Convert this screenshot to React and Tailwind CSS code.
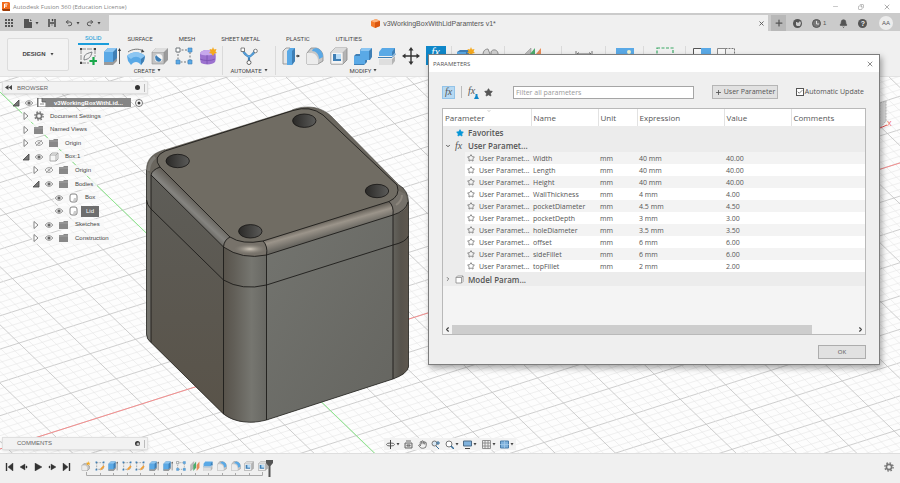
import { Star, X, Plus, Minus, Copy, Bell, Check, ChevronDown, ChevronRight, ChevronLeft, Hand, Undo2, Redo2 } from 'lucide-react'

const TABS = ['SOLID', 'SURFACE', 'MESH', 'SHEET METAL', 'PLASTIC', 'UTILITIES']

const GROUPS = [
  { name: 'CREATE', width: 'w-[150px]', label: true, icons: ['sketch', 'extrude', 'revolve', 'hole', 'pattern', 'form'] },
  { name: 'AUTOMATE', width: 'w-[53px]', label: true, icons: ['automate'] },
  { name: 'MODIFY', width: 'w-[176px]', label: true, icons: ['presspull', 'fillet', 'shell', 'combine', 'split', 'move', 'fx'] },
  { name: 'ASSEMBLE', width: 'w-[53px]', icons: ['component', 'joint'] },
  { name: 'CONSTRUCT', width: 'w-[57px]', icons: ['plane'] },
  { name: 'INSPECT', width: 'w-[44px]', icons: ['measure'] },
  { name: 'INSERT', width: 'w-[38px]', icons: ['insert'] },
  { name: 'SELECT', width: 'w-[42px]', icons: ['select'] },
  { name: 'POSITION', width: 'w-[55px]', icons: ['capture', 'revert'], last: true },
]

const TREE = [
  { label: 'Document Settings', pad: 'pl-[20px]', arrow: 'closed', icon: 'gear' },
  { label: 'Named Views', pad: 'pl-[20px]', arrow: 'closed', icon: 'folder' },
  { label: 'Origin', pad: 'pl-[20px]', arrow: 'closed', eye: 'off', icon: 'folder' },
  { label: 'Box:1', pad: 'pl-[20px]', arrow: 'open', eye: 'on', icon: 'cube' },
  { label: 'Origin', pad: 'pl-[30px]', arrow: 'closed', eye: 'off', icon: 'folder' },
  { label: 'Bodies', pad: 'pl-[30px]', arrow: 'open', eye: 'on', icon: 'folder' },
  { label: 'Box', pad: 'pl-[52px]', eye: 'on', icon: 'body' },
  { label: 'Lid', pad: 'pl-[52px]', eye: 'on', icon: 'body', selected: true },
  { label: 'Sketches', pad: 'pl-[30px]', arrow: 'closed', eye: 'on', icon: 'folder' },
  { label: 'Construction', pad: 'pl-[30px]', arrow: 'closed', eye: 'on', icon: 'folder' },
]

const PARAMS = [
  ['Width', '40 mm', '40.00'],
  ['Length', '40 mm', '40.00'],
  ['Height', '40 mm', '40.00'],
  ['WallThickness', '4 mm', '4.00'],
  ['pocketDiameter', '4.5 mm', '4.50'],
  ['pocketDepth', '3 mm', '3.00'],
  ['holeDiameter', '3.5 mm', '3.50'],
  ['offset', '6 mm', '6.00'],
  ['sideFillet', '6 mm', '6.00'],
  ['topFillet', '2 mm', '2.00'],
]

const HISTORY = ['newComponent', 'sketchEdit', 'extrude', 'sketchEdit', 'sketchEdit', 'extrude', 'extrude', 'pattern', 'plane', 'split', 'fillet', 'fillet', 'shell', 'shell']

const blue = '#5aa9e6'
const dark = '#3f7fb5'
const line = '#6f7478'

const ART = {
  sketch: (
    <>
      <path d="M2 2h14M2 2v14M16 2v8M2 16h8" stroke="#777" strokeWidth=".8" strokeDasharray="5 1" fill="none" />
      <path d="M5 13c0-5 1-6 8-8-1 5-3 7-8 8z" fill="none" stroke={line} strokeWidth=".9" />
      <path d="M1 1h2v2H1zM15 1h2v2h-2zM1 15h2v2H1z" fill="#444" />
      <path d="M14.500 10v8M10.500 14h8" stroke="#1aa84b" strokeWidth="2.200" />
    </>
  ),
  sketchEdit: (
    <>
      <path d="M3 3h12v12H3z" stroke={line} strokeDasharray="3 2" fill="none" />
      <path d="M1 1h3v3H1zM14 1h3v3h-3zM1 14h3v3H1z" fill={dark} />
      <path d="M9 17l1-4 5-5 2.500 2.500-5 5z" fill="#f0a03a" />
    </>
  ),
  extrude: (
    <>
      <path d="M1 5l4-4h9v11l-4 5H1z" fill={dark} />
      <path d="M1 5h9v12H1z" fill={blue} />
      <path d="M1 5l4-4h9l-4 4z" fill="#8cc6f2" />
      <path d="M1 15h9l4-4v3l-4 4H1z" fill="#9a9a9a" />
      <path d="M16.500 3v14" stroke="#333" strokeWidth=".8" />
      <path d="M15 4l1.500-3L18 4z" fill="#333" />
    </>
  ),
  revolve: (
    <>
      <path d="M0 9c5-5 13-5 18 0l-1 5-3 4c-3-4-7-4-10 0l-3-4z" fill={blue} />
      <path d="M0 9c5-5 13-5 18 0l-4 3c-3-3-7-3-10 0z" fill="#8cc6f2" />
      <path d="M14 12l4-3-1 5-3 4z" fill={dark} />
      <path d="M1 5c4-3 11-4 15-1" stroke="#555" strokeWidth=".8" fill="none" />
      <path d="M15 2l2.500 3-3.500.5z" fill="#444" />
    </>
  ),
  hole: (
    <>
      <path d="M1 5l4-4h12v12l-4 4H1z" fill="#9b9b9b" />
      <path d="M1 5h12v12H1z" fill="#c4c4c4" stroke="#909090" strokeWidth=".6" />
      <path d="M1 5l4-4h12l-4 4z" fill="#dedede" />
      <circle cx="7.500" cy="11" r="4" fill="#f5f5f5" />
      <path d="M5 8a4 4 0 0 0 4 6.500 4 4 0 0 0 1.500-2L7 10z" fill={dark} />
    </>
  ),
  pattern: (
    <>
      <path d="M3 3h12v12H3z" stroke={line} strokeDasharray="2 1.500" fill="none" />
      <path d="M1 1h4v4H1z" fill="#fff" stroke={line} />
      <path d="M13 1h4v4h-4zM1 13h4v4H1zM13 13h4v4h-4z" fill={blue} stroke={dark} strokeWidth=".6" />
    </>
  ),
  form: (
    <>
      <path d="M1 7c0-2 3-4 7-4l8 2c1 2 1 8 0 10-2 3-11 3-14 1-1-2-1-7-1-9z" fill="#9c72cf" />
      <path d="M1 7c0-2 3-4 7-4s6 1 8 3c-1 3-13 3-15 1z" fill="#c7a8ec" />
      <path d="M8 8v9M1 12c4 2 11 2 15 0" stroke="#7a50b0" strokeWidth=".8" fill="none" />
      <path d="M14 0l1 2.500 2.500-.5-1 2.500 1.500 1.500-2.500.5L14 9l-1.500-2.500-2.500-.5 1.500-1.500-1-2.500 2.500.5z" fill="#f5a81c" />
    </>
  ),
  automate: (
    <>
      <path d="M3 3c1 5 4 5 6 7 2-2 5-2 6-7M9 9v6" stroke={dark} strokeWidth="2.200" fill="none" />
      <path d="M3 3c1 5 4 5 6 7 2-2 5-2 6-7" stroke={blue} strokeWidth="1.200" fill="none" />
      <path d="M1 1h3.500v3.500H1z" fill="#fff" stroke="#666" strokeWidth=".8" />
      <circle cx="15.500" cy="4" r="1.800" fill="#fff" stroke="#666" strokeWidth=".8" />
      <circle cx="9" cy="15.500" r="2" fill="#fff" stroke="#666" />
    </>
  ),
  presspull: (
    <>
      <path d="M1 4l3-3h4v13l-3 3H1z" fill="#e6e6e6" stroke="#888" strokeWidth=".8" />
      <path d="M5 4l3-3h5v13l-3 4H5z" fill={blue} />
      <path d="M10 4l3-3v13l-3 4z" fill={dark} />
      <path d="M14 9h2" stroke="#333" />
      <path d="M15.500 7.500L18 9l-2.500 1.500z" fill="#333" />
    </>
  ),
  fillet: (
    <>
      <path d="M1 6l4-5h5c5 1 7 5 7 9v4l-5 3H1z" fill="#c8c8c8" stroke="#888" strokeWidth=".8" />
      <path d="M1 6h5c4 1 6 4 6 8v3H1z" fill="#ececec" />
      <path d="M7 2l3-1c5 1 7 5 7 9l-4 2c0-5-3-8-7-8z" fill={blue} />
    </>
  ),
  shell: (
    <>
      <path d="M1 5l4-4h12v12l-4 4H1z" fill="#b4b4b4" stroke="#888" strokeWidth=".8" />
      <path d="M1 5h12v12H1z" fill="#f4f4f4" stroke="#999" strokeWidth=".5" />
      <path d="M1 5l4-4h12l-4 4z" fill="#dcdcdc" />
      <path d="M3 7h8v7H3z" fill={dark} />
      <path d="M6 7h5v5H6z" fill="#b9dcf6" />
    </>
  ),
  combine: (
    <>
      <path d="M6 3l2-2h10v9l-2 3h-3v2l-3 3H0V9l2-2h4z" fill={dark} />
      <path d="M6 4h9v9h-4v4H0V9h6z" fill={blue} />
      <path d="M6 4l2-3h10l-3 3z" fill="#8cc6f2" />
    </>
  ),
  split: (
    <>
      <path d="M1 5l3-4h13v5l-3 3H1z" fill={blue} />
      <path d="M14 5l3-4v5l-3 3z" fill={dark} />
      <path d="M1 12h13l3-3v5l-3 4H1z" fill="#b5b5b5" />
      <path d="M1 12h13v6H1z" fill="#dedede" />
      <path d="M0 10.500h14l4-4" stroke={dark} fill="none" />
    </>
  ),
  move: (
    <path d="M9 0l2.500 3.500H9.700v4.800h4.800V6.500L18 9l-3.500 2.500V9.700H9.700v4.800h1.800L9 18l-2.500-3.500h1.800V9.700H3.500v1.800L0 9l3.500-2.500v1.800h4.800V3.500H6.500z" fill="#333" />
  ),
  component: (
    <>
      <path d="M0 5l3-2h9v13H0z" fill={dark} />
      <path d="M0 5h9v11H0z" fill={blue} />
      <path d="M14 0l1 2.500 2.500-.5-1 2.500 1.500 1.500-2.500.5L14 9l-1.500-2.500-2.500-.5 1.500-1.500-1-2.500 2.500.5z" fill="#f5a81c" />
    </>
  ),
  newComponent: (
    <>
      <path d="M2 8l3-3h5l5 4v5l-3 3H2z" fill="#c9c9c9" stroke="#777" />
      <path d="M2 8h6l3 3v6H2z" fill="#ececec" />
      <path d="M13 0l1 3h3l-2 2 1 3-3-2-3 2 1-3-2-2h3z" fill="#f5a81c" />
    </>
  ),
  joint: (
    <>
      <path d="M2 8c0-5 3-6 5-6l2 5-2 8H3z" fill="#d7d7d7" stroke="#777" strokeWidth=".8" />
      <path d="M10 5c1-3 6-3 7 1v8l-4 1-3-4z" fill="#cfcfcf" stroke="#777" strokeWidth=".8" />
      <circle cx="6" cy="9" r="2" fill={line} />
    </>
  ),
  plane: (
    <>
      <path d="M1 7l6-6v11l-6 6z" fill="#bcbcbc" stroke="#888" strokeWidth=".5" />
      <path d="M6 7l5-6v11l-5 6z" fill="#4cab6c" />
      <path d="M12 7l5-6v11l-5 6z" fill="#e78a55" />
    </>
  ),
  measure: <path d="M1 4v9M17 4v9M2 7h14M4 5.500L2 7l2 1.500M14 5.500L16 7l-2 1.500" stroke="#666" strokeWidth=".9" fill="none" />,
  insert: (
    <>
      <path d="M0 1h18v16H0z" fill={blue} />
      <path d="M0 13l6-6 4 4 3-2 5 5v3H0z" fill="#2d6794" />
      <circle cx="13" cy="5" r="2" fill="#f3f3d0" />
    </>
  ),
  select: <path d="M1 1h16v16H1z" fill="none" stroke="#3aa765" strokeDasharray="3 1.500" strokeWidth="1.200" />,
  capture: (
    <>
      <path d="M.5 1.500h17v14H.5z" fill="#f7f7f7" stroke="#555" />
      <path d="M8 1h10v9H8z" fill={blue} />
    </>
  ),
  revert: (
    <>
      <path d="M.5 1.500h8v14h-8z" fill="#f7f7f7" stroke="#888" />
      <path d="M8.500 1.500h9v8h-9" fill="none" stroke="#777" strokeDasharray="2 1" />
    </>
  ),
}

function Art({ name, className }) {
  return <svg viewBox="0 0 18 18" className={className} aria-hidden="true">{ART[name]}</svg>
}

function Caret() {
  return <svg viewBox="0 0 4 3" className="w-[4px] h-[3px] shrink-0"><path d="M.5 0h3L2 2.500z" fill="#444" /></svg>
}

function Gear({ className }) {
  return (
    <svg viewBox="0 0 10 10" className={className} fill="none" stroke="#777">
      <circle cx="5" cy="5" r="2.600" strokeWidth="1.600" />
      <circle cx="5" cy="5" r="4.100" strokeWidth="1.400" strokeDasharray="1.600 1.620" />
    </svg>
  )
}

function Fx({ className }) {
  return <span className={`font-['Liberation_Serif',serif] italic leading-none ${className}`}>fx</span>
}

function TitleBar() {
  return (
    <header className="flex items-center h-[13px] bg-white pl-[2px] pr-[9px] text-[#858585]">
      <svg viewBox="0 0 8 9" className="w-[8px] h-[9px] mr-[3px]">
        <path d="M0 0h7l1 1v8H1L0 8z" fill="#f26a1b" />
        <path d="M0 7h8v2H1z" fill="#9c3c08" />
        <path d="M2.500 6V2h3M2.500 4h2.500" stroke="#fff" fill="none" />
      </svg>
      <h1 className="font-['Open_Sans',sans-serif] text-[6px] leading-[8px]">Autodesk Fusion 360 (Education License)</h1>
      <div className="ml-auto flex items-center gap-[19px]">
        <button aria-label="Minimize"><Minus className="size-[7px]" strokeWidth={1.500} /></button>
        <button aria-label="Restore"><Copy className="size-[6px] -scale-x-100" strokeWidth={2} /></button>
        <button aria-label="Close"><X className="size-[8px]" strokeWidth={2} /></button>
      </div>
    </header>
  )
}

function TabStrip() {
  return (
    <div className="flex h-[18px] bg-[#cbcbcb] pt-[2px] text-[#555]">
      <div className="w-[109px] shrink-0 flex items-center pl-[5px] gap-[3px]">
        <button aria-label="Data panel" className="mr-[8px]">
          <svg viewBox="0 0 8 8" className="size-[8px]" fill="#555">
            <path d="M0 0h2v2H0zM3 0h2v2H3zM6 0h2v2H6zM0 3h2v2H0zM3 3h2v2H3zM6 3h2v2H6zM0 6h2v2H0zM3 6h2v2H3zM6 6h2v2H6z" />
          </svg>
        </button>
        <button aria-label="File"><svg viewBox="0 0 8 9" className="w-[8px] h-[9px]"><path d="M0 0h5v3h3v6H0zM6 0l2 2H6z" fill="#555" /></svg></button>
        <Caret />
        <button aria-label="Save" className="mx-[6px]">
          <svg viewBox="0 0 8 8" className="size-[8px]"><path d="M0 0h8v8H0z" fill="#666" /><path d="M2 0h4v3H2zM2 5h4v3H2z" fill="#cbcbcb" /><path d="M3 6h2M4 0h1v2H4z" stroke="#666" strokeWidth=".6" /></svg>
        </button>
        <button aria-label="Undo"><Undo2 className="size-[8px]" strokeWidth={3} /></button>
        <Caret />
        <button aria-label="Redo" className="ml-[3px]"><Redo2 className="size-[8px]" strokeWidth={3} /></button>
        <Caret />
      </div>
      <div className="flex-1 flex items-center bg-[#f0f0f0] pr-[3px]">
        <div className="flex-1 flex items-center justify-center gap-[3px]">
          <svg viewBox="0 0 9 9" className="size-[9px]">
            <path d="M0 2l5-2 4 2v5L4 9 0 7z" fill="#f47a2a" />
            <path d="M0 2l5-2 4 2-5 1.500z" fill="#fdb37e" />
            <path d="M4 3.500L9 2v5L4 9z" fill="#d9560f" />
          </svg>
          <span className="text-[7px] leading-[9px]">v3WorkingBoxWithLidParamters v1*</span>
        </div>
        <button aria-label="Close tab"><X className="size-[7px]" strokeWidth={3} /></button>
      </div>
      <div className="w-[132px] flex items-center pl-[3px] pr-[7px]">
        <button aria-label="New tab" className="w-[15px] self-stretch bg-[#b8b8b8] grid place-items-center"><Plus className="size-[10px]" strokeWidth={3} /></button>
        <button aria-label="Extensions" className="ml-[7px]">
          <svg viewBox="0 0 9 9" className="size-[9px]"><circle cx="4.500" cy="4.500" r="4.500" fill="#555" /><path d="M3 3h1l1 1 2-2 1 2-1 3H4L3 6z" fill="#cbcbcb" /></svg>
        </button>
        <button className="ml-[10px] flex items-center gap-[2px] text-[6px]">
          <svg viewBox="0 0 9 9" className="size-[9px]"><circle cx="4.500" cy="4.500" r="4" fill="#777" stroke="#555" /><path d="M4.500 2v3H7" stroke="#ddd" fill="none" /></svg>
          1
        </button>
        <button aria-label="Notifications" className="ml-[13px]"><Bell className="size-[9px]" fill="#555" strokeWidth={2} /></button>
        <button aria-label="Help" className="ml-[10px] size-[9px] rounded-full bg-[#555] text-[#eee] text-[7px] leading-[9px] font-bold">?</button>
        <button className="ml-auto size-[14px] rounded-full bg-[#ececec] text-[6px]">AA</button>
      </div>
    </div>
  )
}

function Ribbon() {
  return (
    <div className="flex h-[46px] bg-[#f0f0f0] border-b border-[#e2e2e2] pl-[7px] text-[#444]">
      <button className="mt-[7px] h-[33px] w-[62px] shrink-0 rounded-[2px] border border-[#dcdcdc] bg-[#f3f3f3] flex items-center justify-center gap-[4px] text-[6px] font-bold">
        DESIGN <Caret />
      </button>
      <div className="ml-[4px] font-['Roboto',sans-serif]">
        <nav className="flex gap-[12px] pl-[5px] h-[15px]">
          {TABS.map((t, i) => (
            <button key={t} className={`px-[7px] h-[14px] text-[6px] leading-[11px] whitespace-nowrap ${i === 0 ? 'text-[#0696d7] border-b-2 border-[#1b9ddb]' : ''}`}>
              {t}
            </button>
          ))}
        </nav>
        <div className="flex">
          {GROUPS.map(g => (
            <section key={g.name} aria-label={g.name} className={`flex flex-col items-center shrink-0 h-[29px] ${g.width} ${g.last ? '' : 'border-r border-[#dadada]'}`}>
              <div className="flex gap-[6px] h-[20px]">
                {g.icons.map(n => n === 'fx' ? (
                  <button key={n} aria-label="Change parameters" className="w-[20px] h-[19px] bg-[#0f87c9] text-white flex items-start justify-center">
                    <Fx className="text-[12px]" />
                  </button>
                ) : (
                  <button key={n} aria-label={n}><Art name={n} className="size-[18px]" /></button>
                ))}
              </div>
              {g.label && (
                <span className="flex items-center gap-[2px] text-[6px] leading-[9px]">{g.name} <Caret /></span>
              )}
            </section>
          ))}
        </div>
      </div>
    </div>
  )
}

// The ground grid: both families of lines run parallel, one heavy line in five
function gridLines(y0, slope, step, from, to) {
  const out = []
  for (let k = from; k <= to; k++) {
    const y = y0 + (k * step) / 5
    out.push(<path key={k} d={`M0 ${y}L1400 ${y + slope * 1400}`} stroke={k % 5 === 0 ? '#c2c2c2' : '#e6e6e6'} strokeWidth={k % 5 === 0 ? 0.8 : 0.6} />)
  }
  return out
}

function Model() {
  return (
    <svg viewBox="0 77 900 376" preserveAspectRatio="xMinYMin slice" className="absolute inset-0 w-full h-full" aria-label="Model view">
      <defs>
        <linearGradient id="corner"><stop offset="0" stopColor="#58534b" /><stop offset=".25" stopColor="#625f58" /><stop offset=".65" stopColor="#767670" /><stop offset="1" stopColor="#686863" /></linearGradient>
        <linearGradient id="edgeR"><stop offset="0" stopColor="#64635d" /><stop offset=".5" stopColor="#57534c" /><stop offset="1" stopColor="#5e574e" /></linearGradient>
        <linearGradient id="front" x1="0" y1="0" x2="1" y2="1"><stop offset="0" stopColor="#73746f" /><stop offset="1" stopColor="#656560" /></linearGradient>
        <linearGradient id="left" x1="0" y1="0" x2="0" y2="1"><stop offset="0" stopColor="#5e5d58" /><stop offset="1" stopColor="#595349" /></linearGradient>
        <linearGradient id="bandL" gradientUnits="userSpaceOnUse" x1="195" y1="200" x2="183" y2="213"><stop offset="0" stopColor="#625e57" /><stop offset=".55" stopColor="#858480" /><stop offset="1" stopColor="#5f5d58" /></linearGradient>
        <linearGradient id="bandR" gradientUnits="userSpaceOnUse" x1="325" y1="221" x2="329" y2="235"><stop offset="0" stopColor="#67625a" /><stop offset=".4" stopColor="#9b948a" /><stop offset="1" stopColor="#6a6862" /></linearGradient>
        <radialGradient id="glint"><stop offset="0" stopColor="#d0c8bb" /><stop offset="1" stopColor="#8d887f" stopOpacity="0" /></radialGradient>
        <linearGradient id="bore"><stop offset="0" stopColor="#2a2927" /><stop offset="1" stopColor="#5b5b59" /></linearGradient>
      </defs>
      <rect y="77" width="1400" height="900" fill="#fdfdfd" />
      <g fill="none">
        {gridLines(449, -0.318, 33.3, -60, 90)}
        {gridLines(92, 0.965, 58.2, -120, 60)}
        <path d="M0 449L1400 4" stroke="#f58e8e" />
        <path d="M0 92L500 574" stroke="#8cea8c" />
      </g>
      <path d="M880 103l6-2v20l-6 7z" fill="#d6d6d6" stroke="#b5b5b5" strokeDasharray="2 1" />
      <path d="M880 128l7-3" stroke="#e05050" />
      <text x="887" y="126" fontSize="7" fill="#f06060">X</text>

      <path d="M146.500 170C146.500 158 154 153 165 149.500L292 110C306 105 320 106 331 116L399 185Q408 190 408.500 202V367Q407 374 393 379L266.500 420C252 424 235 423 223.500 414L151 342.500Q146.500 339 146.500 334z" fill="#6a665e" />
      <path d="M146.500 170L151 175V342.500Q146.500 339 146.500 334z" fill="#74736d" />
      <path d="M151 175L223.500 247V414L151 342.500z" fill="url(#left)" />
      <path d="M223.500 247Q242 260 266.500 255V420C252 424 235 423 223.500 414z" fill="url(#corner)" />
      <path d="M266.500 255L393 215V379L266.500 420z" fill="url(#front)" />
      <path d="M393 215Q406 210 408.500 202V367Q407 374 393 379z" fill="url(#edgeR)" />
      <path d="M160 167L230 237Q224 240 223.500 247L151 175Q152 170 160 167z" fill="url(#bandL)" />
      <path d="M263 241L389 201.500Q394 206 393 215L266.500 255Q268 246 263 241z" fill="url(#bandR)" />
      <path d="M230 237Q244 245 263 241Q268 246 266.500 255Q242 260 223.500 247Q224 240 230 237z" fill="#77726a" />
      <ellipse cx="250" cy="249" rx="16" ry="5" fill="url(#glint)" />
      <path d="M389 201.500Q398 197 398 190L405 194Q409 202 406 208Q402 213 393 215Q394 206 389 201.500z" fill="#75716a" />
      <path d="M396 205Q402 201 402 195" stroke="#8c867d" strokeWidth="2" fill="none" />
      <path d="M155 157Q149 162 148.500 171" stroke="#7d7b75" strokeWidth="3" fill="none" />
      <path d="M165 151L293 110.500Q310 105 323 115L397 185Q401 196 389 201.500L263 241Q242 245 230 237L160 167Q152 157 165 151z" fill="#706c63" />

      <g fill="none" stroke="#1d1c1a" strokeWidth=".9">
        <path d="M165 151L293 110.500Q310 105 323 115L397 185Q401 196 389 201.500L263 241Q242 245 230 237L160 167Q152 157 165 151z" />
        <path d="M151 175L223.500 247Q242 260 266.500 255L393 215Q406 211 408 202" />
        <path d="M146.500 200Q147 205 151 209L223.500 280Q242 291 266.500 285L393 245Q406 242 408.500 236" />
        <path d="M151 342.500V175Q152 170 160 167M223.500 414V247Q224 240 230 237M266.500 420V255Q268 246 263 241M393 379V215Q394 206 389 201.500" />
        <path d="M146.500 170V334Q146.500 339 151 342.500L223.500 414C235 423 252 424 266.500 420L393 379Q407 374 408.500 367V202Q408 190 399 185" strokeWidth=".7" />
        <path d="M146.500 170C146.500 158 154 153 165 149.500M292 110C306 105 320 106 331 116L399 185" stroke="#4a4843" strokeWidth=".6" />
      </g>
      {[[177.7, 161], [304.3, 120.7], [377, 191], [250.3, 231.3]].map(([cx, cy]) => (
        <ellipse key={cx} cx={cx} cy={cy} rx="11.700" ry="6.700" fill="url(#bore)" stroke="#151413" strokeWidth=".8" />
      ))}
    </svg>
  )
}

function Arrow({ kind }) {
  if (!kind) return null
  return (
    <svg viewBox="0 0 8 8" className="size-[8px] mr-[4px] shrink-0">
      {kind === 'open'
        ? <path d="M7 1v6H1z" fill="#777" stroke="#444" strokeWidth=".8" />
        : <path d="M2 0.500l4 3.500-4 3.500z" fill="#fff" stroke="#777" strokeWidth=".9" />}
    </svg>
  )
}

function Eye({ kind }) {
  if (!kind) return null
  return (
    <svg viewBox="0 0 10 8" className="w-[10px] h-[8px] mr-[5px] shrink-0">
      <path d="M1 4q4-5 8 0q-4 5-8 0z" fill={kind === 'on' ? '#ddd' : '#fff'} stroke="#999" strokeWidth=".9" />
      <circle cx="5" cy="4" r="1.500" fill={kind === 'on' ? '#666' : '#bbb'} />
      {kind === 'off' && <path d="M2 7l6-6" stroke="#999" strokeWidth=".8" />}
    </svg>
  )
}

function NodeIcon({ kind }) {
  if (kind === 'gear') return <Gear className="size-[10px] mr-[6px] shrink-0" />
  return (
    <svg viewBox="0 0 10 10" className="size-[10px] mr-[6px] shrink-0">
      {kind === 'folder' && <path d="M0 2h4l1-1h4v8H0z" fill="#888" />}
      {kind === 'folder' && <path d="M0 3h9" stroke="#b5b5b5" strokeWidth=".6" />}
      {kind === 'cube' && <path d="M1 3l2-2h6v6L7 9H1zM1 3h6v6M7 3l2-2" fill="#f6f6f6" stroke="#999" strokeWidth=".8" />}
      {kind === 'body' && <><rect x="1" y="1" width="7" height="8" rx="2" fill="#fff" stroke="#777" strokeWidth=".9" /><path d="M5 5h2v3H4z" fill="#ccc" /></>}
    </svg>
  )
}

function PanelBar({ title, children, closed }) {
  return (
    <div className="flex items-center h-[13px] w-[146px] bg-[#f2f2f2] border border-[#e0e0e0] px-[2px] text-[6px] text-[#666] shadow-sm">
      <span className="w-[12px] flex">{children}</span>
      <h2>{title}</h2>
      <button aria-label={`${title} options`} className="ml-auto mr-[4px] size-[5px] rounded-full bg-[#333] grid place-items-center">
        {closed && <Plus className="size-[4px] text-white" strokeWidth={5} />}
      </button>
      <span className="w-px h-[8px] bg-[#bbb]" />
    </div>
  )
}

function Browser() {
  return (
    <aside className="relative w-[146px] text-[#444] text-[6px] leading-[8px]">
      <PanelBar title="BROWSER">
        <svg viewBox="0 0 7 5" className="w-[7px] h-[5px]"><path d="M3.500 0v5L0 2.500zM7 0v5L3.500 2.500z" fill="#444" /></svg>
      </PanelBar>
      <div className="grid auto-rows-fr h-[149px] mt-[2px]">
        <div className="flex items-center pl-[10px]">
          <Arrow kind="open" />
          <Eye kind="on" />
          <span className="flex items-center w-[94px] h-[9px] -ml-[2px] bg-[#858585] text-white font-bold whitespace-nowrap">
            <svg viewBox="0 0 9 9" className="size-[9px] mr-[8px] shrink-0"><path d="M1 0h4v4h4v5H1z" fill="#fff" stroke="#555" strokeWidth=".8" /><path d="M3 6h4" stroke="#888" /></svg>
            v3WorkingBoxWithLid...
          </span>
          <svg viewBox="0 0 8 8" className="size-[8px] ml-[4px] shrink-0"><circle cx="4" cy="4" r="3.500" fill="#fff" stroke="#555" strokeWidth=".8" /><circle cx="4" cy="4" r="1.500" fill="#333" /></svg>
        </div>
        {TREE.map((n, i) => (
          <div key={i} className={`flex items-center ${n.pad}`}>
            <div className="flex items-center bg-[#f7f7f7]/80">
              <Arrow kind={n.arrow} />
              <Eye kind={n.eye} />
              <NodeIcon kind={n.icon} />
              <span className={n.selected ? 'bg-[#6e6e6e] text-white -ml-[4px] px-[5px] leading-[11px]' : 'pr-[4px] leading-[11px]'}>{n.label}</span>
            </div>
          </div>
        ))}
      </div>
    </aside>
  )
}

function NavBar() {
  return (
    <div className="absolute left-1/2 -translate-x-1/2 bottom-[3px] flex items-center justify-between w-[132px] h-[12px] px-[2px] bg-[#f1f1f1]/90 text-[#555]">
      <span className="flex items-center gap-[1px]"><svg viewBox="0 0 9 9" className="size-[9px]"><ellipse cx="4.500" cy="4.500" rx="4" ry="1.500" fill="none" stroke="#666" /><path d="M4.500 0v9" stroke="#444" /></svg><Caret /></span>
      <svg viewBox="0 0 9 9" className="size-[9px]"><path d="M1 3h7v5H1zM2 1h5M3 5h3v1H3z" fill="#ddd" stroke="#666" /></svg>
      <Hand className="size-[9px]" strokeWidth={2} />
      <svg viewBox="0 0 9 9" className="size-[9px]"><circle cx="3.500" cy="3.500" r="2.500" fill="#d7e7f3" stroke="#777" /><path d="M5 6l3 3M7 1v4M5 3h4" stroke="#356d99" /></svg>
      <span className="flex items-center gap-[1px]"><svg viewBox="0 0 9 9" className="size-[9px]"><circle cx="4" cy="4" r="3" fill="#fff" stroke="#777" /><path d="M6 6l3 3" stroke="#356d99" strokeWidth="1.500" /></svg><Caret /></span>
      <span className="flex items-center gap-[1px]"><svg viewBox="0 0 9 9" className="size-[9px]"><path d="M.5 1h8v5h-8z" fill="#7fb2dd" stroke="#4d6c88" /><path d="M2 8.500h5" stroke="#444" /></svg><Caret /></span>
      <span className="flex items-center gap-[1px]"><svg viewBox="0 0 9 9" className="size-[9px]"><path d="M.5.5h8v8h-8zM3 0v9M6 0v9M0 3h9M0 6h9" fill="#eee" stroke="#888" strokeWidth=".9" /></svg><Caret /></span>
      <span className="flex items-center gap-[1px]"><svg viewBox="0 0 9 9" className="size-[9px]"><path d="M.5 1h8v7h-8z" fill="#7fb2dd" stroke="#4a7ca8" /><path d="M4.500 1v7M0 4.500h9" stroke="#a9cdea" strokeWidth=".7" /></svg><Caret /></span>
    </div>
  )
}

function Timeline() {
  const buttons = [
    ['To start', 'M1 0h1v8H1zM8 0L3 4l5 4z'],
    ['Step back', 'M7 3h1v2H7zM6 1L1 4l5 3z'],
    ['Play', 'M1 0l7 4-7 4z'],
    ['Step forward', 'M1 3h1v2H1zM3 1l5 3-5 3z'],
    ['To end', 'M7 0h1v8H7zM1 0l5 4-5 4z'],
  ]
  return (
    <footer className="flex items-center h-[30px] bg-[#f0f0f0] border-t border-[#dedede] px-[5px]">
      <div className="flex justify-between w-[66px] -mt-[4px]">
        {buttons.map(([name, d]) => (
          <button key={name} aria-label={name}><svg viewBox="0 0 9 8" className="w-[9px] h-[8px]"><path d={d} fill="#333" stroke="#333" strokeWidth=".4" /></svg></button>
        ))}
      </div>
      <div className="ml-[10px] flex flex-col w-[187px]">
        <div className="flex justify-between items-center">
          {HISTORY.map((h, i) => <Art key={i} name={h} className="size-[10px]" />)}
        </div>
        <svg viewBox="0 0 187 4" className="w-[187px] h-[4px] mt-[1px]">
          <path d="M5.500 0v3.500h176V0M19.500 1v2M32.500 1v2M46.500 1v2M59.500 1v2M73.500 1v2M86.500 1v2M100.500 1v2M114.500 1v2M127.500 1v2M141.500 1v2M154.500 1v2M168.500 1v2" stroke="#aaa" fill="none" />
        </svg>
      </div>
      <svg viewBox="0 0 7 17" className="w-[7px] h-[17px] -ml-[2px] shrink-0"><path d="M0 0h7v3L4.500 6v11h-2V6L0 3z" fill="#555" /></svg>
      <button aria-label="Timeline settings" className="ml-auto mr-[1px] -mt-[4px]"><Gear className="size-[10px]" /></button>
    </footer>
  )
}

function ParameterTable() {
  return (
    <div className="mt-[9px] border border-[#b9b9b9] bg-[#f4f4f4]">
      <div className="h-[216px]">
        <table className="w-full table-fixed border-collapse text-left text-[#555] text-[7px]">
          <colgroup>
            <col className="w-[88px]" /><col className="w-[67px]" /><col className="w-[39px]" /><col className="w-[87px]" /><col className="w-[67px]" /><col />
          </colgroup>
          <thead className="bg-white text-[8px] leading-[12px]">
            <tr className="h-[17px]">
              {['Parameter', 'Name', 'Unit', 'Expression', 'Value', 'Comments'].map((h, i) => (
                <th key={h} className={`relative p-0 pl-[2px] font-normal ${i < 5 ? 'border-r border-[#e2e2e2]' : ''}`}>
                  {h}
                  {i === 0 && <ChevronDown className="absolute left-1/2 top-0 size-[4px]" />}
                </th>
              ))}
            </tr>
          </thead>
          <tbody className="leading-[11px]">
            <tr className="h-[13px] bg-[#ececec]">
              <th colSpan={6} className="p-0 pl-[13px] text-[8px] font-semibold">
                <span className="flex items-center gap-[4px]"><Star className="size-[8px] text-[#0696d7]" fill="#0696d7" />Favorites</span>
              </th>
            </tr>
            <tr className="h-[13px] bg-[#ececec]">
              <th colSpan={6} className="p-0 pl-[2px] text-[8px] font-semibold">
                <span className="flex items-center gap-[4px]"><ChevronDown className="size-[6px]" strokeWidth={4} /><Fx className="w-[9px] text-[10px] font-normal" />User Paramet...</span>
              </th>
            </tr>
            {PARAMS.map(([name, expr, value], i) => (
              <tr key={name} className={`h-[12px] ${i % 2 ? 'bg-white' : 'bg-[#f3f3f3]'}`}>
                <td className="p-0 bg-[linear-gradient(90deg,#ececec_22px,transparent_22px)]">
                  <span className="flex items-center pl-[24px]"><Star className="size-[8px] mr-[4px] shrink-0" strokeWidth={2} /><span className="whitespace-nowrap">User Paramet...</span></span>
                </td>
                <td className="p-0 pl-[2px]">{name}</td>
                <td className="p-0 pl-[2px]">mm</td>
                <td className="p-0 pl-[2px]">{expr}</td>
                <td className="p-0 pl-[2px]">{value}</td>
                <td className="p-0" />
              </tr>
            ))}
            <tr className="h-[14px] bg-[#ececec]">
              <th colSpan={6} className="p-0 pl-[2px] text-[8px] font-semibold">
                <span className="flex items-center gap-[4px]">
                  <ChevronRight className="size-[6px]" strokeWidth={3} />
                  <svg viewBox="0 0 9 9" className="size-[9px]"><path d="M1 2.500L2.500 1H8v5.500L6.500 8H1zM1 2.500h5.500V8M6.500 2.500L8 1" fill="#fff" stroke="#888" strokeWidth=".8" /></svg>
                  Model Param...
                </span>
              </th>
            </tr>
          </tbody>
        </table>
      </div>
      <div className="flex items-center h-[9px] text-[#444]">
        <span className="w-[9px] grid place-items-center"><ChevronLeft className="size-[7px]" strokeWidth={4} /></span>
        <div className="flex-1"><div className="w-[89%] h-[9px] bg-[#cdcdcd]" /></div>
        <span className="w-[9px] grid place-items-center"><ChevronRight className="size-[7px]" strokeWidth={4} /></span>
      </div>
    </div>
  )
}

function ParametersDialog() {
  return (
    <div role="dialog" aria-label="Parameters" className="absolute left-[428px] top-[54px] w-[452px] border border-[#7d7d7d] bg-[#efefef] shadow-[2px_3px_6px_rgba(0,0,0,0.35)] font-['Open_Sans',sans-serif] text-[#555]">
      <div className="flex items-center justify-between h-[17px] bg-white pl-[4px] pr-[5px]">
        <h2 className="text-[6px] leading-[8px]">PARAMETERS</h2>
        <button aria-label="Close dialog"><X className="size-[8px]" strokeWidth={2} /></button>
      </div>
      <div className="px-[13px] pt-[13px] pb-[5px]">
        <div className="flex items-center h-[14px]">
          <button aria-label="All parameters" className="size-[13px] bg-[#b7d9f2] border border-[#93c3e8] grid place-items-center"><Fx className="text-[10px]" /></button>
          <span className="w-px h-[12px] bg-[#bbb] mx-[6px]" />
          <button aria-label="User parameters" className="relative w-[11px] h-[13px] flex"><Fx className="text-[10px]" />
            <svg viewBox="0 0 5 5" className="absolute right-0 bottom-0 size-[5px]"><path d="M1.500 0h2v2L5 5H0l1.500-3z" fill="#0f87c9" /></svg>
          </button>
          <button aria-label="Favorites only" className="ml-[5px] mr-[20px]"><Star className="size-[9px]" fill="#555" /></button>
          <input type="text" aria-label="Filter" placeholder="Filter all parameters" className="w-[181px] h-[13px] border border-[#a5a5a5] bg-white px-[2px] text-[7px] placeholder:text-[#999]" />
          <button className="ml-[18px] w-[66px] h-[14px] border border-[#b5b5b5] bg-[#e1e1e1] flex items-center justify-center gap-[2px] text-[7px] whitespace-nowrap">
            <Plus className="size-[7px]" strokeWidth={3} />User Parameter
          </button>
          <label className="ml-auto mr-[2px] flex items-center gap-[1px] text-[7px] whitespace-nowrap">
            <span className="grid size-[8px]">
              <input type="checkbox" defaultChecked className="col-start-1 row-start-1 appearance-none size-[8px] border border-[#555] bg-white" />
              <Check className="col-start-1 row-start-1 size-[8px] p-[1px] pointer-events-none" strokeWidth={3} />
            </span>
            Automatic Update
          </label>
        </div>
        <ParameterTable />
        <div className="flex justify-end mt-[10px]">
          <button className="w-[48px] h-[14px] border border-[#adadad] bg-[#e1e1e1] text-[6px]">OK</button>
        </div>
      </div>
    </div>
  )
}

export default function App() {
  return (
    <div className="relative min-h-screen flex flex-col overflow-hidden bg-white font-['Liberation_Sans',Arial,sans-serif]">
      <TitleBar />
      <TabStrip />
      <Ribbon />
      <main className="relative flex-1 flex flex-col justify-between pl-[2px] pt-[4px] pb-[3px]">
        <Model />
        <Browser />
        <div className="relative">
          <PanelBar title="COMMENTS" closed />
        </div>
        <NavBar />
      </main>
      <Timeline />
      <ParametersDialog />
    </div>
  )
}
